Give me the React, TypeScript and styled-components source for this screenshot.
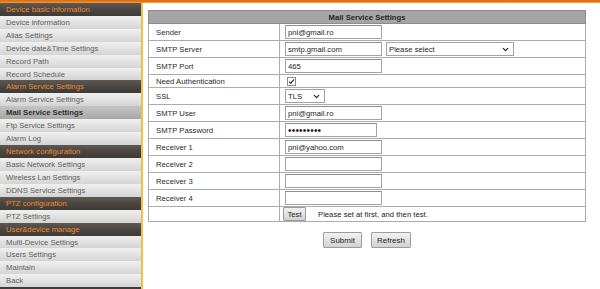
import React from 'react';
import styled, { createGlobalStyle } from 'styled-components';
import { ChevronDown } from 'lucide-react';

const GlobalStyle = createGlobalStyle`
  html, body {
    margin: 0;
    padding: 0;
    background: #ffffff;
  }
  body {
    font-family: "Liberation Sans", Arial, sans-serif;
    font-size: 7.7px;
  }
`;

const Page = styled.div`
  width: 600px;
  height: 289px;
  overflow: hidden;
  display: flex;
  flex-direction: column;
`;

const TopBar = styled.div`
  height: 3px;
  flex: none;
  background: linear-gradient(#de6a12 0%, #e8801e 70%, #f3b060 100%);
`;

const Body = styled.div`
  flex: 1;
  display: flex;
  min-height: 0;
`;

const Sidebar = styled.nav`
  width: 141px;
  flex: none;
  border-right: 2px solid #f1c04a;
  background: linear-gradient(#5d5854, #3e3a36);
  display: flex;
  flex-direction: column;
`;

const GroupTitle = styled.div`
  height: 13px;
  line-height: 13px;
  padding-left: 6px;
  color: #ec8a30;
  background: linear-gradient(#5d5854 0%, #49443f 55%, #3e3a36 100%);
  white-space: nowrap;
`;

const NavItem = styled.div<{ $active?: boolean }>`
  height: 12.9px;
  line-height: 13px;
  padding-left: 6px;
  white-space: nowrap;
  color: ${p => (p.$active ? '#2e2e2e' : '#5e5e5e')};
  font-weight: ${p => (p.$active ? 700 : 400)};
  background: ${p =>
    p.$active
      ? 'linear-gradient(#c4c4c4 0%, #b3b3b3 60%, #a8a8a8 100%)'
      : 'linear-gradient(#f0f0f0 0%, #e2e2e2 50%, #d4d4d4 100%)'};
`;

const Main = styled.main`
  padding: 7px 0 0 5px;
  display: flex;
  flex-direction: column;
  align-items: flex-start;
`;

const Panel = styled.div`
  display: flex;
  flex-direction: column;
  align-items: center;
`;

const SettingsTable = styled.table`
  width: 438px;
  border-collapse: collapse;
  border: 1px solid #9a9a9a;
  color: #2a2a2a;
`;

const HeadCell = styled.th`
  height: 12px;
  padding: 0;
  background: #a5a5a5;
  border: 1px solid #8c8c8c;
  font-weight: 700;
  color: #262626;
  text-align: center;
`;

const Row = styled.tr<{ $h: number }>`
  height: ${p => p.$h}px;
`;

const LabelCell = styled.td`
  width: 123px;
  padding: 0 0 0 7px;
  border: 1px solid #ababab;
  white-space: nowrap;
`;

const ValueCell = styled.td<{ $pad?: number }>`
  padding: 0 0 0 ${p => p.$pad ?? 5}px;
  border: 1px solid #ababab;
  white-space: nowrap;
`;

const Inline = styled.div`
  display: flex;
  align-items: center;
  gap: 4px;
`;

const TextInput = styled.input<{ $w?: number }>`
  box-sizing: border-box;
  width: ${p => p.$w ?? 97}px;
  height: 14px;
  margin: 0;
  padding: 0 2px;
  border: 1px solid #a3a3a3;
  border-top-color: #8e8e8e;
  background: #fff;
  font-family: "Liberation Sans", Arial, sans-serif;
  font-size: 7.7px;
  color: #1e1e1e;
  outline: none;
`;

const PasswordInput = styled(TextInput)`
  font-size: 10px;
  letter-spacing: 0.2px;
`;

const SelectBox = styled.div<{ $w: number }>`
  box-sizing: border-box;
  width: ${p => p.$w}px;
  height: 14px;
  padding: 0 3px 0 2px;
  border: 1px solid #a3a3a3;
  background: #fff;
  display: flex;
  align-items: center;
  justify-content: space-between;
  color: #1e1e1e;
`;

const CheckBox = styled.span`
  box-sizing: border-box;
  width: 9px;
  height: 9px;
  margin-left: 2px;
  border: 1px solid #8a8a8a;
  background: #fff;
  display: flex;
  align-items: center;
  justify-content: center;
`;

const GrayButton = styled.button`
  box-sizing: border-box;
  margin: 0;
  border: 1px solid #9c9c9c;
  border-radius: 1px;
  background: linear-gradient(#f2f2f2 0%, #e2e2e2 50%, #d2d2d2 100%);
  font-family: "Liberation Sans", Arial, sans-serif;
  font-size: 7.7px;
  color: #1e1e1e;
  padding: 0;
`;

const TestButton = styled(GrayButton)`
  width: 23px;
  height: 14px;
`;

const Hint = styled.span`
  margin-left: 8px;
  color: #222;
`;

const Actions = styled.div`
  margin-top: 10px;
  display: flex;
  gap: 9px;
`;

const ActionButton = styled(GrayButton)<{ $w: number }>`
  width: ${p => p.$w}px;
  height: 16px;
  font-size: 8px;
`;

const menu = [
  {
    title: 'Device basic information',
    items: ['Device information', 'Alias Settings', 'Device date&Time Settings', 'Record Path', 'Record Schedule'],
  },
  {
    title: 'Alarm Service Settings',
    items: ['Alarm Service Settings', 'Mail Service Settings', 'Ftp Service Settings', 'Alarm Log'],
  },
  {
    title: 'Network configuration',
    items: ['Basic Network Settings', 'Wireless Lan Settings', 'DDNS Service Settings'],
  },
  { title: 'PTZ configuration', items: ['PTZ Settings'] },
  {
    title: 'User&device manage',
    items: ['Multi-Device Settings', 'Users Settings', 'Maintain', 'Back'],
  },
];

const Chevron = () => <ChevronDown size={9} strokeWidth={3.2} color="#222" />;

const App: React.FC = () => {
  return (
    <Page>
      <GlobalStyle />
      <TopBar />
      <Body>
        <Sidebar>
          {menu.map(group => (
            <React.Fragment key={group.title}>
              <GroupTitle>{group.title}</GroupTitle>
              {group.items.map(item => (
                <NavItem key={group.title + item} $active={item === 'Mail Service Settings'}>
                  {item}
                </NavItem>
              ))}
            </React.Fragment>
          ))}
        </Sidebar>

        <Main>
          <Panel>
            <SettingsTable>
              <thead>
                <tr>
                  <HeadCell colSpan={2}>Mail Service Settings</HeadCell>
                </tr>
              </thead>
              <tbody>
                <Row $h={17}>
                  <LabelCell>Sender</LabelCell>
                  <ValueCell><TextInput readOnly value="pni@gmail.ro" /></ValueCell>
                </Row>
                <Row $h={17}>
                  <LabelCell>SMTP Server</LabelCell>
                  <ValueCell>
                    <Inline>
                      <TextInput readOnly value="smtp.gmail.com" />
                      <SelectBox $w={128}>
                        <span>Please select</span>
                        <Chevron />
                      </SelectBox>
                    </Inline>
                  </ValueCell>
                </Row>
                <Row $h={17}>
                  <LabelCell>SMTP Port</LabelCell>
                  <ValueCell><TextInput readOnly value="465" /></ValueCell>
                </Row>
                <Row $h={13}>
                  <LabelCell>Need Authentication</LabelCell>
                  <ValueCell>
                    <CheckBox>
                      <svg width="7" height="7" viewBox="0 0 7 7">
                        <path d="M1 3.6 L2.8 5.4 L6 1.4" fill="none" stroke="#333" strokeWidth="1.2" />
                      </svg>
                    </CheckBox>
                  </ValueCell>
                </Row>
                <Row $h={17}>
                  <LabelCell>SSL</LabelCell>
                  <ValueCell>
                    <SelectBox $w={40}>
                      <span>TLS</span>
                      <Chevron />
                    </SelectBox>
                  </ValueCell>
                </Row>
                <Row $h={17}>
                  <LabelCell>SMTP User</LabelCell>
                  <ValueCell><TextInput readOnly value="pni@gmail.ro" /></ValueCell>
                </Row>
                <Row $h={17}>
                  <LabelCell>SMTP Password</LabelCell>
                  <ValueCell><PasswordInput type="password" readOnly value="123456789" $w={92} /></ValueCell>
                </Row>
                <Row $h={17}>
                  <LabelCell>Receiver 1</LabelCell>
                  <ValueCell><TextInput readOnly value="pni@yahoo.com" /></ValueCell>
                </Row>
                {[2, 3, 4].map(n => (
                  <Row $h={17} key={n}>
                    <LabelCell>Receiver {n}</LabelCell>
                    <ValueCell><TextInput readOnly value="" /></ValueCell>
                  </Row>
                ))}
                <Row $h={14}>
                  <LabelCell />
                  <ValueCell $pad={3}>
                    <Inline>
                      <TestButton>Test</TestButton>
                      <Hint>Please set at first, and then test.</Hint>
                    </Inline>
                  </ValueCell>
                </Row>
              </tbody>
            </SettingsTable>
            <Actions>
              <ActionButton $w={39}>Submit</ActionButton>
              <ActionButton $w={40}>Refresh</ActionButton>
            </Actions>
          </Panel>
        </Main>
      </Body>
    </Page>
  );
};

export default App;
